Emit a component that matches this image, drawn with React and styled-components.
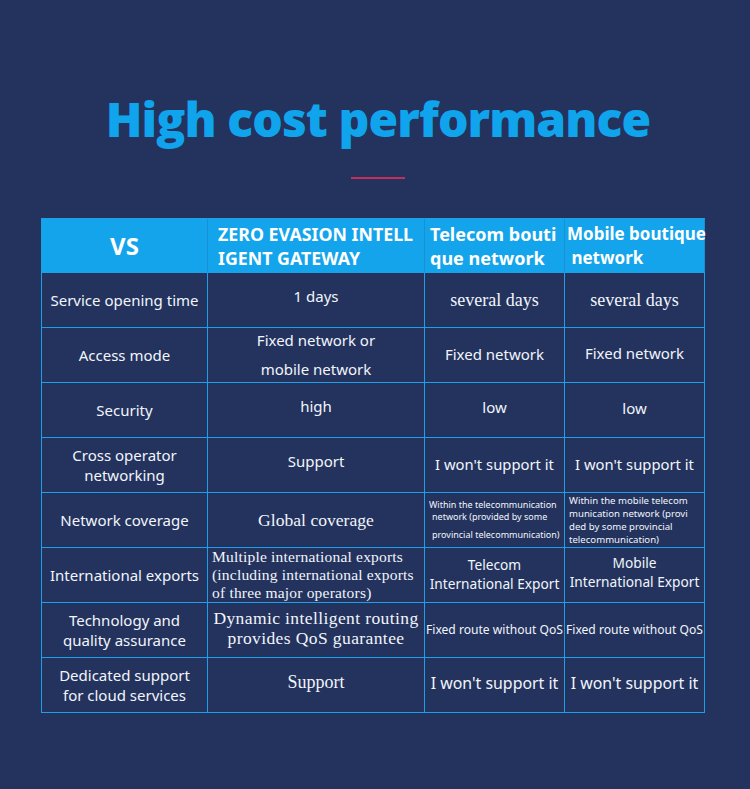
import React from "react";
import styled, { createGlobalStyle } from "styled-components";

const GlobalStyle = createGlobalStyle`
  * {
    box-sizing: border-box;
    margin: 0;
    padding: 0;
  }

  body {
    background: #23335e;
    color: #ffffff;
    font-family: "Noto Sans", "Open Sans", sans-serif;
    -webkit-font-smoothing: antialiased;
  }
`;

const Page = styled.div`
  width: 750px;
  height: 789px;
  display: flex;
  flex-direction: column;
  align-items: center;
  padding-top: 89px;
  background: #23335e;
`;

const Title = styled.h1`
  font-family: "Open Sans", "Noto Sans", sans-serif;
  font-size: 48px;
  font-weight: 800;
  line-height: 60px;
  letter-spacing: -0.9px;
  color: #10a4ec;
  margin-left: 6px;
`;

const Divider = styled.div`
  width: 54px;
  height: 2px;
  background: #c2305a;
  margin-top: 28px;
  margin-left: 6px;
`;

const Grid = styled.div`
  margin-top: 39px;
  margin-right: 4px;
  display: grid;
  grid-template-columns: 166px 217px 140px 140px;
  grid-auto-rows: 55px;
  grid-template-rows: 54px;
  border-top: 1px solid #1e9fea;
  border-left: 1.5px solid #1e9fea;
`;

const Cell = styled.div`
  display: flex;
  flex-direction: column;
  justify-content: center;
  align-items: ${(p) => (p.$left ? "flex-start" : "center")};
  text-align: ${(p) => (p.$left ? "left" : "center")};
  padding: ${(p) => (p.$left ? "0 0 0 4px" : "0 1px")};
  padding-bottom: ${(p) => (p.$lift ? `${p.$lift}px` : "0")};
  border-right: 1.5px solid #1e9fea;
  border-bottom: 1.5px solid #1e9fea;
  font-family: ${(p) =>
    p.$serif
      ? '"Liberation Serif", "DejaVu Serif", serif'
      : '"Noto Sans", "Open Sans", sans-serif'};
  font-size: ${(p) => p.$size || 15}px;
  line-height: ${(p) => p.$lh || 20.5}px;
  letter-spacing: ${(p) => p.$ls || 0}px;
  color: #f2f5fb;
  white-space: nowrap;
`;

const HeadCell = styled.div`
  display: flex;
  flex-direction: column;
  justify-content: center;
  align-items: ${(p) => (p.$center ? "center" : "flex-start")};
  padding-left: ${(p) => (p.$center ? 0 : p.$pad || 8)}px;
  background: #14a4ec;
  border-right: 1.5px solid #1a8fd6;
  border-bottom: 1.5px solid #1e9fea;
  font-family: "Noto Sans", "Open Sans", sans-serif;
  font-weight: 700;
  font-size: ${(p) => p.$size || 17.8}px;
  line-height: 24px;
  color: #ffffff;
  white-space: nowrap;
  position: relative;
  z-index: 1;
`;

const Small = styled.span`
  display: block;
  font-size: ${(p) => p.$size || 10}px;
  line-height: ${(p) => p.$lh || 13}px;
  margin-top: ${(p) => p.$gap || 0}px;
  padding-left: ${(p) => p.$indent || 0}px;
`;

const rows = [
  {
    name: "Service opening time",
    cells: [
      { text: "1 days", lift: 7 },
      { text: "several days", serif: true, size: 18 },
      { text: "several days", serif: true, size: 18 },
    ],
  },
  {
    name: "Access mode",
    cells: [
      { text: ["Fixed network or", "mobile network"], lh: 29 },
      { text: "Fixed network", lift: 2 },
      { text: "Fixed network", lift: 4 },
    ],
  },
  {
    name: "Security",
    cells: [
      { text: "high", lift: 8 },
      { text: "low", lift: 6 },
      { text: "low", lift: 4 },
    ],
  },
  {
    name: ["Cross operator", "networking"],
    cells: [
      { text: "Support", lift: 8 },
      { text: "I won't support it", size: 14.8, lift: 2 },
      { text: "I won't support it", size: 14.8, lift: 2 },
    ],
  },
  {
    name: "Network coverage",
    cells: [
      { text: "Global coverage", serif: true, size: 17.6 },
      { special: "telecom" },
      { special: "mobile" },
    ],
  },
  {
    name: "International exports",
    cells: [
      {
        text: [
          "Multiple international exports",
          "(including international exports",
          "of three major operators)",
        ],
        serif: true,
        size: 15.5,
        lh: 17.8,
        ls: 0.2,
        left: true,
      },
      { text: ["Telecom", "International Export"], size: 13.7, lh: 18.7 },
      {
        text: ["Mobile", "International Export"],
        size: 13.7,
        lh: 18.7,
        lift: 4,
      },
    ],
  },
  {
    name: ["Technology and", "quality assurance"],
    cells: [
      {
        text: ["Dynamic intelligent routing", "provides QoS guarantee"],
        serif: true,
        size: 17.5,
        lh: 20.2,
        ls: 0.4,
        lift: 4,
      },
      { text: "Fixed route without QoS", size: 12.1 },
      { text: "Fixed route without QoS", size: 12.1 },
    ],
  },
  {
    name: ["Dedicated support", "for cloud services"],
    cells: [
      { text: "Support", serif: true, size: 18, lift: 6 },
      { text: "I won't support it", size: 15.9, lift: 4 },
      { text: "I won't support it", size: 15.9, lift: 4 },
    ],
  },
];

const Lines = ({ text }) =>
  Array.isArray(text) ? text.map((t) => <span key={t}>{t}</span>) : text;

const Coverage = ({ kind }) =>
  kind === "telecom" ? (
    <Cell $left>
      <Small $size={9} $lh={12.3}>Within the telecommunication</Small>
      <Small $size={9} $lh={12.3} $indent={3}>
        network (provided by some
      </Small>
      <Small $size={9} $lh={12.3} $indent={3} $gap={5}>
        provincial telecommunication)
      </Small>
    </Cell>
  ) : (
    <Cell $left>
      <Small $size={9.6} $lh={13}>Within the mobile telecom</Small>
      <Small $size={9.6} $lh={13}>munication network (provi</Small>
      <Small $size={9.6} $lh={13}>ded by some provincial</Small>
      <Small $size={9.6} $lh={13}>telecommunication)</Small>
    </Cell>
  );

export default function App() {
  return (
    <>
      <GlobalStyle />
      <Page>
        <Title>High cost performance</Title>
        <Divider />
        <Grid>
          <HeadCell $center $size={24}>
            VS
          </HeadCell>
          <HeadCell $pad={10}>
            <span>ZERO EVASION INTELL</span>
            <span>IGENT GATEWAY</span>
          </HeadCell>
          <HeadCell $pad={5} $size={18}>
            <span>Telecom bouti</span>
            <span>que network</span>
          </HeadCell>
          <HeadCell $pad={2} $size={17}>
            <span>Mobile boutique</span>
            <span>&nbsp;network</span>
          </HeadCell>

          {rows.map((row, i) => (
            <React.Fragment key={i}>
              <Cell $size={15}>
                <Lines text={row.name} />
              </Cell>
              {row.cells.map((c, j) =>
                c.special ? (
                  <Coverage key={j} kind={c.special} />
                ) : (
                  <Cell
                    key={j}
                    $serif={c.serif}
                    $size={c.size}
                    $lh={c.lh}
                    $ls={c.ls}
                    $lift={c.lift}
                    $left={c.left}
                  >
                    <Lines text={c.text} />
                  </Cell>
                )
              )}
            </React.Fragment>
          ))}
        </Grid>
      </Page>
    </>
  );
}
